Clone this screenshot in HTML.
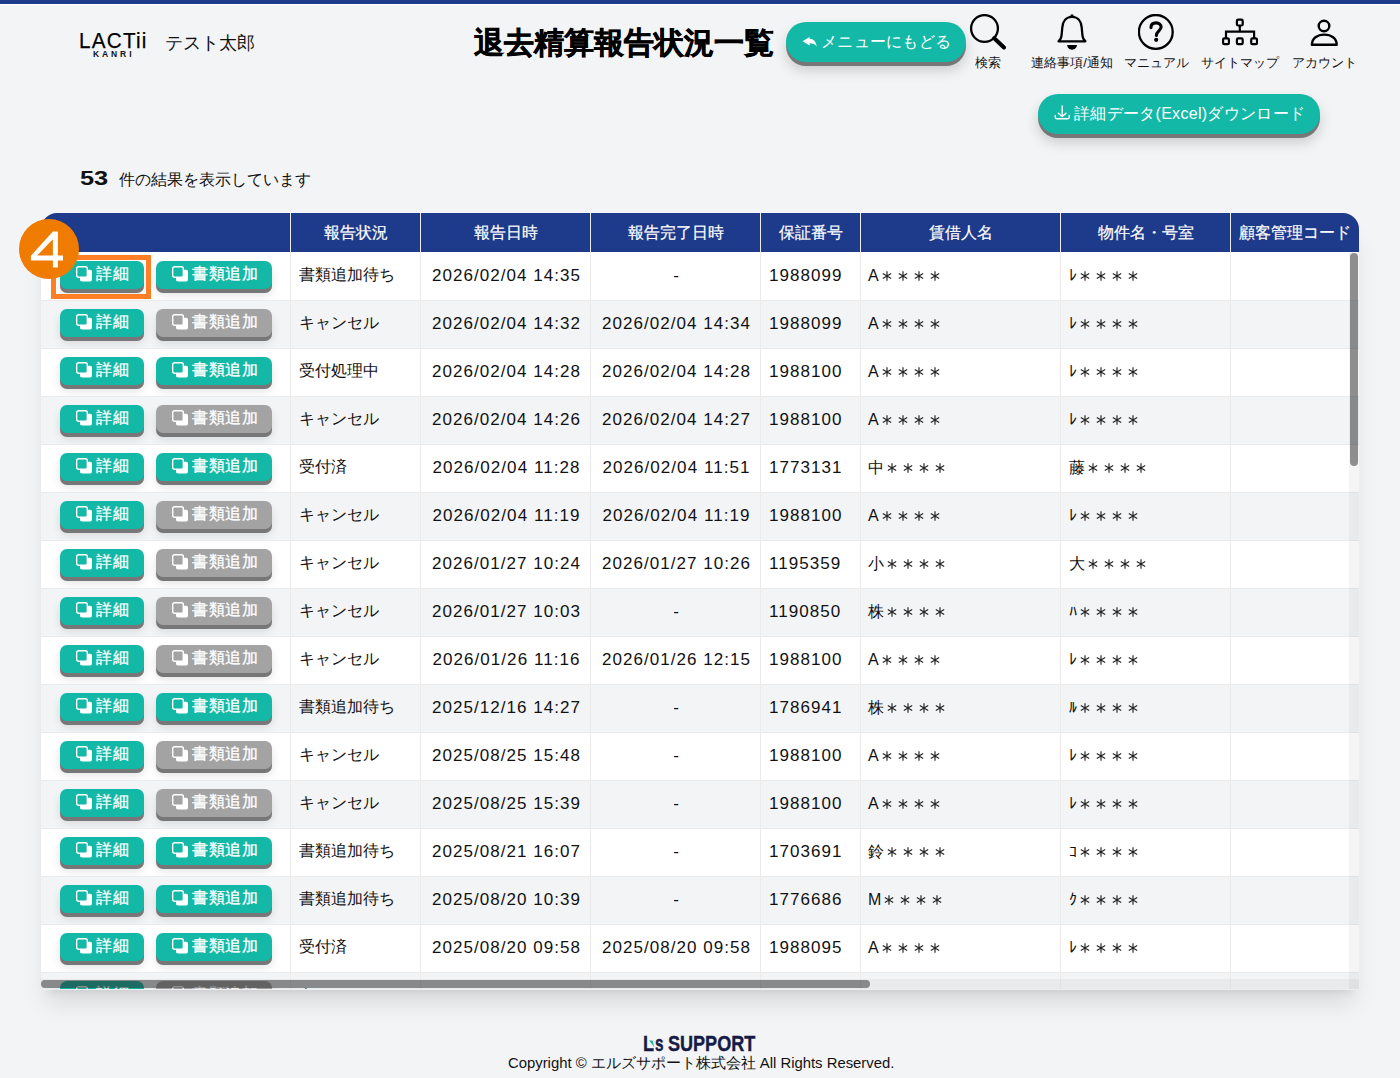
<!DOCTYPE html>
<html lang="ja"><head><meta charset="utf-8"><title>退去精算報告状況一覧</title>
<style>
*{box-sizing:border-box;margin:0;padding:0}
html,body{width:1400px;height:1078px;overflow:hidden}
body{background:#f3f4f6;font-family:"Liberation Sans",sans-serif;color:#111;position:relative}
.topbar{position:absolute;left:0;top:0;width:1400px;height:4px;background:#1e3a8a}
.topline{position:absolute;left:0;top:4px;width:1400px;height:1px;background:#fff}
.abs{position:absolute;white-space:nowrap}
.logo{left:80px;top:29px;width:66px;height:30px}
.logo .l1{position:absolute;left:-1px;top:1.5px;font-size:21.5px;font-weight:normal;-webkit-text-stroke:0.25px #000;letter-spacing:1.3px;line-height:21px;color:#000;transform:scaleX(0.96);transform-origin:0 0}
.logo .l2{position:absolute;left:13px;top:20.5px;font-size:8.5px;font-weight:bold;letter-spacing:2.9px;line-height:8px;color:#111}
.user{left:165px;top:32px;font-size:18px;line-height:22px}
.title{left:474px;top:24.5px;font-size:30px;font-weight:bold;line-height:36px;color:#000;-webkit-text-stroke:0.5px #000}
.pill{position:absolute;background:#14b8a6;color:#fff;border-radius:999px;box-shadow:0 4px 0 #777,0 8px 14px rgba(0,0,0,.18);font-size:16px;line-height:39px;white-space:nowrap;letter-spacing:0.3px}
.menu{left:786px;top:22px;width:180px;height:40px;padding-left:35px}
.dl{left:1038px;top:94px;width:282px;height:40px;padding-left:36px}
.nav{position:absolute;top:12px;width:84px;height:60px;text-align:center}
.nav svg{position:absolute;left:24px;top:2px}
.nav span{position:absolute;left:-20px;right:-20px;top:43px;font-size:13px;line-height:16px;text-align:center}
.count{left:80px;top:166px;font-size:19.5px;font-weight:bold;line-height:24px;transform:scaleX(1.3);transform-origin:0 0}
.counttxt{left:119px;top:170px;font-size:16px;line-height:20px}
.table{position:absolute;left:41px;top:213px;width:1318px;height:776px;overflow:hidden;border-radius:16px 16px 0 0;background:#fff;box-shadow:0 20px 25px -5px rgba(0,0,0,.1),0 8px 10px -6px rgba(0,0,0,.1)}
.thead{position:absolute;left:0;top:0;width:1318px;height:39px;background:#1e3a8a}
.th{position:absolute;top:0;height:39px;line-height:39px;color:#fff;font-weight:normal;-webkit-text-stroke:0.2px #fff;font-size:16px;text-align:center;padding-left:1px}
.row{position:absolute;left:0;width:1318px;height:48px}
.vl{position:absolute;top:0;width:1px;height:776px;background:#ebebeb}
.hl{position:absolute;left:0;width:1318px;height:1px;background:#ebebeb}
.btn{position:absolute;top:9px;height:28px;border-radius:7px;color:#fff;font-size:16px;line-height:26px;letter-spacing:0.6px;-webkit-text-stroke:0.3px #fff;box-shadow:0 4px 0 #777,0 6px 10px rgba(0,0,0,.12);white-space:nowrap}
.btn.teal{background:#14b8a6}
.btn.gray{background:#a3a3a3}
.b1{left:19px;width:84px;padding-left:16px}
.b2{left:115px;width:116px;padding-left:16px}
.ibox{display:inline-block;width:16px;height:16px;vertical-align:-3px;margin-right:4px}
.ibox.teal{color:#14b8a6} .ibox.gray{color:#a3a3a3}
.ic{display:block}
.c{position:absolute;top:0;height:48px;line-height:48px;font-size:16px;white-space:nowrap;color:#111}
.num{font-size:17px;letter-spacing:1.05px}
.ast{display:inline-block;vertical-align:middle;position:relative;top:-1px}
.hw{display:inline-block;width:8px;overflow:visible}
.c2{left:258px;top:-1px}
.c3{left:380.5px;width:170px;text-align:center}
.c4{left:550.5px;width:170px;text-align:center}
.c5{left:728px}
.c6{left:827px}
.c7{left:1028px}
.vtrack{position:absolute;left:1308px;top:39px;width:10px;height:737px;background:rgba(0,0,0,.04)}
.vthumb{position:absolute;left:1309px;top:40px;width:8px;height:213px;border-radius:4px;background:rgba(40,40,40,.5)}
.htrack{position:absolute;left:0;top:766px;width:1318px;height:10px;background:rgba(0,0,0,.04)}
.hthumb{position:absolute;left:0;top:767px;width:829px;height:8px;border-radius:4px;background:rgba(40,40,40,.5)}
.badge{position:absolute;left:19px;top:219px;width:60px;height:60px;border-radius:50%;background:#ef7b00}
.badge svg{display:block}
.hilite{position:absolute;left:51px;top:255px;width:100px;height:44px;border:5px solid #ff7f27}
.fl{position:absolute;top:1033px;font-size:22px;font-weight:bold;color:#161b45;line-height:22px;transform:scaleX(0.82);transform-origin:0 0;-webkit-text-stroke:0.4px #161b45;white-space:nowrap}
.copy{left:508px;top:1053.5px;font-size:14.85px;line-height:18px;color:#111}
</style></head><body>
<svg width="0" height="0" style="position:absolute"><defs><symbol id="a4" viewBox="0 0 64 16"><path d="M8 3.35V12.65M3.8 5.6L12.2 10.4M3.8 10.4L12.2 5.6" stroke="#222" stroke-width="1.15" fill="none"/><path d="M24 3.35V12.65M19.8 5.6L28.2 10.4M19.8 10.4L28.2 5.6" stroke="#222" stroke-width="1.15" fill="none"/><path d="M40 3.35V12.65M35.8 5.6L44.2 10.4M35.8 10.4L44.2 5.6" stroke="#222" stroke-width="1.15" fill="none"/><path d="M56 3.35V12.65M51.8 5.6L60.2 10.4M51.8 10.4L60.2 5.6" stroke="#222" stroke-width="1.15" fill="none"/></symbol></defs></svg>
<div class="topbar"></div><div class="topline"></div>
<div class="abs logo"><div class="l1">LACTii</div><div class="l2">KANRI</div></div>
<div class="abs user">テスト太郎</div>
<div class="abs title">退去精算報告状況一覧</div>
<div class="pill menu"><svg width="16" height="12" viewBox="0 0 16 12" style="position:absolute;left:16px;top:14px"><path d="M0.6 5.2 L7.6 1 V2.7 C11.5 2.7 14 5.5 14.8 10.8 C13.5 8.5 11.5 7.3 7.6 7.3 V9.4 Z" fill="#fff"/></svg>メニューにもどる</div>
<div class="nav" style="left:946px"><svg width="36" height="38" viewBox="0 0 36 38"><circle cx="14.5" cy="14.5" r="13.4" fill="none" stroke="#000" stroke-width="2.3"/><line x1="24.2" y1="24.2" x2="34" y2="33.5" stroke="#000" stroke-width="4" stroke-linecap="round"/></svg><span>検索</span></div>
<div class="nav" style="left:1030px"><svg width="36" height="38" viewBox="0 0 36 38"><path d="M18 2.8 C12 2.8 8.6 7.5 8.3 13.5 L7.6 21 C7.3 24.5 6.2 26 4.5 27.3 H31.5 C29.8 26 28.7 24.5 28.4 21 L27.7 13.5 C27.4 7.5 24 2.8 18 2.8 Z" fill="none" stroke="#000" stroke-width="2.3" stroke-linejoin="round"/><circle cx="18" cy="1.9" r="1.7" fill="#000"/><path d="M13.2 31.1 H22.9 C22.9 33.8 20.7 35.8 18 35.8 C15.3 35.8 13.2 33.8 13.2 31.1 Z" fill="#000"/></svg><span>連絡事項/通知</span></div>
<div class="nav" style="left:1114px"><svg width="36" height="38" viewBox="0 0 36 38"><circle cx="17.8" cy="17.9" r="16.9" fill="none" stroke="#000" stroke-width="2.3"/><path d="M13 13.6 C13 10.3 15.2 8.9 18.1 8.9 C21.1 8.9 23.1 10.7 23.1 13.1 C23.1 16.6 18.4 17.2 18.4 21.4" fill="none" stroke="#000" stroke-width="3.1" stroke-linecap="round"/><circle cx="18.2" cy="25.8" r="2.1" fill="#000"/></svg><span>マニュアル</span></div>
<div class="nav" style="left:1198px"><svg width="36" height="38" viewBox="0 0 36 38"><g fill="none" stroke="#000" stroke-width="2.2"><rect x="1.1" y="24.4" width="5.8" height="5.8" rx="1.3"/><rect x="14.9" y="24.4" width="5.8" height="5.8" rx="1.3"/><rect x="29.2" y="24.4" width="5.8" height="5.8" rx="1.3"/><rect x="14.9" y="5.7" width="5.8" height="5.8" rx="1.3"/><path d="M17.8 11.5 V17.6 M4 24.4 V17.6 H32.1 V24.4"/></g></svg><span>サイトマップ</span></div>
<div class="nav" style="left:1282px"><svg width="36" height="38" viewBox="0 0 36 38"><circle cx="18" cy="12" r="5.3" fill="none" stroke="#000" stroke-width="2.4"/><path d="M5.9 30.8 C5.9 24.3 11.3 20.6 18.3 20.6 C25.3 20.6 30.7 24.3 30.7 30.8 Z" fill="none" stroke="#000" stroke-width="2.4" stroke-linejoin="round"/></svg><span>アカウント</span></div>
<div class="pill dl"><svg width="17" height="17" viewBox="0 0 17 17" style="position:absolute;left:16px;top:10px"><path d="M8.2 2 V12.3 M4.4 9.2 L8.2 12.6 L12 9.2 M1.25 11.3 V13.3 Q1.25 14.75 2.7 14.75 H13.8 Q15.25 14.75 15.25 13.3 V11.3" fill="none" stroke="#fff" stroke-width="1.35" stroke-linecap="round" stroke-linejoin="round"/></svg>詳細データ(Excel)ダウンロード</div>
<div class="abs count">53</div>
<div class="abs counttxt">件の結果を表示しています</div>
<div class="table">
<div class="thead">
<div class="th" style="left:249px;width:130px">報告状況</div>
<div class="th" style="left:379px;width:170px">報告日時</div>
<div class="th" style="left:549px;width:170px">報告完了日時</div>
<div class="th" style="left:719px;width:100px">保証番号</div>
<div class="th" style="left:819px;width:200px">賃借人名</div>
<div class="th" style="left:1019px;width:170px">物件名・号室</div>
<div class="th" style="left:1189px;width:129px;text-align:left;padding-left:9px">顧客管理コード</div>
</div>
<div class="row" style="top:39px;background:#ffffff">
<div class="btn teal b1"><span class="ibox teal"><svg class="ic" width="16" height="16" viewBox="0 0 16 16"><rect x="4" y="3.8" width="12" height="11.8" rx="1.8" fill="#fff"/><rect x="0.7" y="0.7" width="10.6" height="10.6" rx="1.8" fill="currentColor" stroke="#fff" stroke-width="1.4"/></svg></span>詳細</div><div class="btn teal b2"><span class="ibox teal"><svg class="ic" width="16" height="16" viewBox="0 0 16 16"><rect x="4" y="3.8" width="12" height="11.8" rx="1.8" fill="#fff"/><rect x="0.7" y="0.7" width="10.6" height="10.6" rx="1.8" fill="currentColor" stroke="#fff" stroke-width="1.4"/></svg></span>書類追加</div>
<div class="c c2">書類追加待ち</div><div class="c c3 num">2026/02/04 14:35</div><div class="c c4 num">-</div><div class="c c5 num">1988099</div><div class="c c6">A<svg class="ast" width="64" height="16"><use href="#a4"/></svg></div><div class="c c7"><span class="hw">ﾚ</span><svg class="ast" width="64" height="16"><use href="#a4"/></svg></div>
</div>
<div class="row" style="top:87px;background:#f3f4f6">
<div class="btn teal b1"><span class="ibox teal"><svg class="ic" width="16" height="16" viewBox="0 0 16 16"><rect x="4" y="3.8" width="12" height="11.8" rx="1.8" fill="#fff"/><rect x="0.7" y="0.7" width="10.6" height="10.6" rx="1.8" fill="currentColor" stroke="#fff" stroke-width="1.4"/></svg></span>詳細</div><div class="btn gray b2"><span class="ibox gray"><svg class="ic" width="16" height="16" viewBox="0 0 16 16"><rect x="4" y="3.8" width="12" height="11.8" rx="1.8" fill="#fff"/><rect x="0.7" y="0.7" width="10.6" height="10.6" rx="1.8" fill="currentColor" stroke="#fff" stroke-width="1.4"/></svg></span>書類追加</div>
<div class="c c2">キャンセル</div><div class="c c3 num">2026/02/04 14:32</div><div class="c c4 num">2026/02/04 14:34</div><div class="c c5 num">1988099</div><div class="c c6">A<svg class="ast" width="64" height="16"><use href="#a4"/></svg></div><div class="c c7"><span class="hw">ﾚ</span><svg class="ast" width="64" height="16"><use href="#a4"/></svg></div>
</div>
<div class="row" style="top:135px;background:#ffffff">
<div class="btn teal b1"><span class="ibox teal"><svg class="ic" width="16" height="16" viewBox="0 0 16 16"><rect x="4" y="3.8" width="12" height="11.8" rx="1.8" fill="#fff"/><rect x="0.7" y="0.7" width="10.6" height="10.6" rx="1.8" fill="currentColor" stroke="#fff" stroke-width="1.4"/></svg></span>詳細</div><div class="btn teal b2"><span class="ibox teal"><svg class="ic" width="16" height="16" viewBox="0 0 16 16"><rect x="4" y="3.8" width="12" height="11.8" rx="1.8" fill="#fff"/><rect x="0.7" y="0.7" width="10.6" height="10.6" rx="1.8" fill="currentColor" stroke="#fff" stroke-width="1.4"/></svg></span>書類追加</div>
<div class="c c2">受付処理中</div><div class="c c3 num">2026/02/04 14:28</div><div class="c c4 num">2026/02/04 14:28</div><div class="c c5 num">1988100</div><div class="c c6">A<svg class="ast" width="64" height="16"><use href="#a4"/></svg></div><div class="c c7"><span class="hw">ﾚ</span><svg class="ast" width="64" height="16"><use href="#a4"/></svg></div>
</div>
<div class="row" style="top:183px;background:#f3f4f6">
<div class="btn teal b1"><span class="ibox teal"><svg class="ic" width="16" height="16" viewBox="0 0 16 16"><rect x="4" y="3.8" width="12" height="11.8" rx="1.8" fill="#fff"/><rect x="0.7" y="0.7" width="10.6" height="10.6" rx="1.8" fill="currentColor" stroke="#fff" stroke-width="1.4"/></svg></span>詳細</div><div class="btn gray b2"><span class="ibox gray"><svg class="ic" width="16" height="16" viewBox="0 0 16 16"><rect x="4" y="3.8" width="12" height="11.8" rx="1.8" fill="#fff"/><rect x="0.7" y="0.7" width="10.6" height="10.6" rx="1.8" fill="currentColor" stroke="#fff" stroke-width="1.4"/></svg></span>書類追加</div>
<div class="c c2">キャンセル</div><div class="c c3 num">2026/02/04 14:26</div><div class="c c4 num">2026/02/04 14:27</div><div class="c c5 num">1988100</div><div class="c c6">A<svg class="ast" width="64" height="16"><use href="#a4"/></svg></div><div class="c c7"><span class="hw">ﾚ</span><svg class="ast" width="64" height="16"><use href="#a4"/></svg></div>
</div>
<div class="row" style="top:231px;background:#ffffff">
<div class="btn teal b1"><span class="ibox teal"><svg class="ic" width="16" height="16" viewBox="0 0 16 16"><rect x="4" y="3.8" width="12" height="11.8" rx="1.8" fill="#fff"/><rect x="0.7" y="0.7" width="10.6" height="10.6" rx="1.8" fill="currentColor" stroke="#fff" stroke-width="1.4"/></svg></span>詳細</div><div class="btn teal b2"><span class="ibox teal"><svg class="ic" width="16" height="16" viewBox="0 0 16 16"><rect x="4" y="3.8" width="12" height="11.8" rx="1.8" fill="#fff"/><rect x="0.7" y="0.7" width="10.6" height="10.6" rx="1.8" fill="currentColor" stroke="#fff" stroke-width="1.4"/></svg></span>書類追加</div>
<div class="c c2">受付済</div><div class="c c3 num">2026/02/04 11:28</div><div class="c c4 num">2026/02/04 11:51</div><div class="c c5 num">1773131</div><div class="c c6">中<svg class="ast" width="64" height="16"><use href="#a4"/></svg></div><div class="c c7">藤<svg class="ast" width="64" height="16"><use href="#a4"/></svg></div>
</div>
<div class="row" style="top:279px;background:#f3f4f6">
<div class="btn teal b1"><span class="ibox teal"><svg class="ic" width="16" height="16" viewBox="0 0 16 16"><rect x="4" y="3.8" width="12" height="11.8" rx="1.8" fill="#fff"/><rect x="0.7" y="0.7" width="10.6" height="10.6" rx="1.8" fill="currentColor" stroke="#fff" stroke-width="1.4"/></svg></span>詳細</div><div class="btn gray b2"><span class="ibox gray"><svg class="ic" width="16" height="16" viewBox="0 0 16 16"><rect x="4" y="3.8" width="12" height="11.8" rx="1.8" fill="#fff"/><rect x="0.7" y="0.7" width="10.6" height="10.6" rx="1.8" fill="currentColor" stroke="#fff" stroke-width="1.4"/></svg></span>書類追加</div>
<div class="c c2">キャンセル</div><div class="c c3 num">2026/02/04 11:19</div><div class="c c4 num">2026/02/04 11:19</div><div class="c c5 num">1988100</div><div class="c c6">A<svg class="ast" width="64" height="16"><use href="#a4"/></svg></div><div class="c c7"><span class="hw">ﾚ</span><svg class="ast" width="64" height="16"><use href="#a4"/></svg></div>
</div>
<div class="row" style="top:327px;background:#ffffff">
<div class="btn teal b1"><span class="ibox teal"><svg class="ic" width="16" height="16" viewBox="0 0 16 16"><rect x="4" y="3.8" width="12" height="11.8" rx="1.8" fill="#fff"/><rect x="0.7" y="0.7" width="10.6" height="10.6" rx="1.8" fill="currentColor" stroke="#fff" stroke-width="1.4"/></svg></span>詳細</div><div class="btn gray b2"><span class="ibox gray"><svg class="ic" width="16" height="16" viewBox="0 0 16 16"><rect x="4" y="3.8" width="12" height="11.8" rx="1.8" fill="#fff"/><rect x="0.7" y="0.7" width="10.6" height="10.6" rx="1.8" fill="currentColor" stroke="#fff" stroke-width="1.4"/></svg></span>書類追加</div>
<div class="c c2">キャンセル</div><div class="c c3 num">2026/01/27 10:24</div><div class="c c4 num">2026/01/27 10:26</div><div class="c c5 num">1195359</div><div class="c c6">小<svg class="ast" width="64" height="16"><use href="#a4"/></svg></div><div class="c c7">大<svg class="ast" width="64" height="16"><use href="#a4"/></svg></div>
</div>
<div class="row" style="top:375px;background:#f3f4f6">
<div class="btn teal b1"><span class="ibox teal"><svg class="ic" width="16" height="16" viewBox="0 0 16 16"><rect x="4" y="3.8" width="12" height="11.8" rx="1.8" fill="#fff"/><rect x="0.7" y="0.7" width="10.6" height="10.6" rx="1.8" fill="currentColor" stroke="#fff" stroke-width="1.4"/></svg></span>詳細</div><div class="btn gray b2"><span class="ibox gray"><svg class="ic" width="16" height="16" viewBox="0 0 16 16"><rect x="4" y="3.8" width="12" height="11.8" rx="1.8" fill="#fff"/><rect x="0.7" y="0.7" width="10.6" height="10.6" rx="1.8" fill="currentColor" stroke="#fff" stroke-width="1.4"/></svg></span>書類追加</div>
<div class="c c2">キャンセル</div><div class="c c3 num">2026/01/27 10:03</div><div class="c c4 num">-</div><div class="c c5 num">1190850</div><div class="c c6">株<svg class="ast" width="64" height="16"><use href="#a4"/></svg></div><div class="c c7"><span class="hw">ﾊ</span><svg class="ast" width="64" height="16"><use href="#a4"/></svg></div>
</div>
<div class="row" style="top:423px;background:#ffffff">
<div class="btn teal b1"><span class="ibox teal"><svg class="ic" width="16" height="16" viewBox="0 0 16 16"><rect x="4" y="3.8" width="12" height="11.8" rx="1.8" fill="#fff"/><rect x="0.7" y="0.7" width="10.6" height="10.6" rx="1.8" fill="currentColor" stroke="#fff" stroke-width="1.4"/></svg></span>詳細</div><div class="btn gray b2"><span class="ibox gray"><svg class="ic" width="16" height="16" viewBox="0 0 16 16"><rect x="4" y="3.8" width="12" height="11.8" rx="1.8" fill="#fff"/><rect x="0.7" y="0.7" width="10.6" height="10.6" rx="1.8" fill="currentColor" stroke="#fff" stroke-width="1.4"/></svg></span>書類追加</div>
<div class="c c2">キャンセル</div><div class="c c3 num">2026/01/26 11:16</div><div class="c c4 num">2026/01/26 12:15</div><div class="c c5 num">1988100</div><div class="c c6">A<svg class="ast" width="64" height="16"><use href="#a4"/></svg></div><div class="c c7"><span class="hw">ﾚ</span><svg class="ast" width="64" height="16"><use href="#a4"/></svg></div>
</div>
<div class="row" style="top:471px;background:#f3f4f6">
<div class="btn teal b1"><span class="ibox teal"><svg class="ic" width="16" height="16" viewBox="0 0 16 16"><rect x="4" y="3.8" width="12" height="11.8" rx="1.8" fill="#fff"/><rect x="0.7" y="0.7" width="10.6" height="10.6" rx="1.8" fill="currentColor" stroke="#fff" stroke-width="1.4"/></svg></span>詳細</div><div class="btn teal b2"><span class="ibox teal"><svg class="ic" width="16" height="16" viewBox="0 0 16 16"><rect x="4" y="3.8" width="12" height="11.8" rx="1.8" fill="#fff"/><rect x="0.7" y="0.7" width="10.6" height="10.6" rx="1.8" fill="currentColor" stroke="#fff" stroke-width="1.4"/></svg></span>書類追加</div>
<div class="c c2">書類追加待ち</div><div class="c c3 num">2025/12/16 14:27</div><div class="c c4 num">-</div><div class="c c5 num">1786941</div><div class="c c6">株<svg class="ast" width="64" height="16"><use href="#a4"/></svg></div><div class="c c7"><span class="hw">ﾙ</span><svg class="ast" width="64" height="16"><use href="#a4"/></svg></div>
</div>
<div class="row" style="top:519px;background:#ffffff">
<div class="btn teal b1"><span class="ibox teal"><svg class="ic" width="16" height="16" viewBox="0 0 16 16"><rect x="4" y="3.8" width="12" height="11.8" rx="1.8" fill="#fff"/><rect x="0.7" y="0.7" width="10.6" height="10.6" rx="1.8" fill="currentColor" stroke="#fff" stroke-width="1.4"/></svg></span>詳細</div><div class="btn gray b2"><span class="ibox gray"><svg class="ic" width="16" height="16" viewBox="0 0 16 16"><rect x="4" y="3.8" width="12" height="11.8" rx="1.8" fill="#fff"/><rect x="0.7" y="0.7" width="10.6" height="10.6" rx="1.8" fill="currentColor" stroke="#fff" stroke-width="1.4"/></svg></span>書類追加</div>
<div class="c c2">キャンセル</div><div class="c c3 num">2025/08/25 15:48</div><div class="c c4 num">-</div><div class="c c5 num">1988100</div><div class="c c6">A<svg class="ast" width="64" height="16"><use href="#a4"/></svg></div><div class="c c7"><span class="hw">ﾚ</span><svg class="ast" width="64" height="16"><use href="#a4"/></svg></div>
</div>
<div class="row" style="top:567px;background:#f3f4f6">
<div class="btn teal b1"><span class="ibox teal"><svg class="ic" width="16" height="16" viewBox="0 0 16 16"><rect x="4" y="3.8" width="12" height="11.8" rx="1.8" fill="#fff"/><rect x="0.7" y="0.7" width="10.6" height="10.6" rx="1.8" fill="currentColor" stroke="#fff" stroke-width="1.4"/></svg></span>詳細</div><div class="btn gray b2"><span class="ibox gray"><svg class="ic" width="16" height="16" viewBox="0 0 16 16"><rect x="4" y="3.8" width="12" height="11.8" rx="1.8" fill="#fff"/><rect x="0.7" y="0.7" width="10.6" height="10.6" rx="1.8" fill="currentColor" stroke="#fff" stroke-width="1.4"/></svg></span>書類追加</div>
<div class="c c2">キャンセル</div><div class="c c3 num">2025/08/25 15:39</div><div class="c c4 num">-</div><div class="c c5 num">1988100</div><div class="c c6">A<svg class="ast" width="64" height="16"><use href="#a4"/></svg></div><div class="c c7"><span class="hw">ﾚ</span><svg class="ast" width="64" height="16"><use href="#a4"/></svg></div>
</div>
<div class="row" style="top:615px;background:#ffffff">
<div class="btn teal b1"><span class="ibox teal"><svg class="ic" width="16" height="16" viewBox="0 0 16 16"><rect x="4" y="3.8" width="12" height="11.8" rx="1.8" fill="#fff"/><rect x="0.7" y="0.7" width="10.6" height="10.6" rx="1.8" fill="currentColor" stroke="#fff" stroke-width="1.4"/></svg></span>詳細</div><div class="btn teal b2"><span class="ibox teal"><svg class="ic" width="16" height="16" viewBox="0 0 16 16"><rect x="4" y="3.8" width="12" height="11.8" rx="1.8" fill="#fff"/><rect x="0.7" y="0.7" width="10.6" height="10.6" rx="1.8" fill="currentColor" stroke="#fff" stroke-width="1.4"/></svg></span>書類追加</div>
<div class="c c2">書類追加待ち</div><div class="c c3 num">2025/08/21 16:07</div><div class="c c4 num">-</div><div class="c c5 num">1703691</div><div class="c c6">鈴<svg class="ast" width="64" height="16"><use href="#a4"/></svg></div><div class="c c7"><span class="hw">ｺ</span><svg class="ast" width="64" height="16"><use href="#a4"/></svg></div>
</div>
<div class="row" style="top:663px;background:#f3f4f6">
<div class="btn teal b1"><span class="ibox teal"><svg class="ic" width="16" height="16" viewBox="0 0 16 16"><rect x="4" y="3.8" width="12" height="11.8" rx="1.8" fill="#fff"/><rect x="0.7" y="0.7" width="10.6" height="10.6" rx="1.8" fill="currentColor" stroke="#fff" stroke-width="1.4"/></svg></span>詳細</div><div class="btn teal b2"><span class="ibox teal"><svg class="ic" width="16" height="16" viewBox="0 0 16 16"><rect x="4" y="3.8" width="12" height="11.8" rx="1.8" fill="#fff"/><rect x="0.7" y="0.7" width="10.6" height="10.6" rx="1.8" fill="currentColor" stroke="#fff" stroke-width="1.4"/></svg></span>書類追加</div>
<div class="c c2">書類追加待ち</div><div class="c c3 num">2025/08/20 10:39</div><div class="c c4 num">-</div><div class="c c5 num">1776686</div><div class="c c6">M<svg class="ast" width="64" height="16"><use href="#a4"/></svg></div><div class="c c7"><span class="hw">ｸ</span><svg class="ast" width="64" height="16"><use href="#a4"/></svg></div>
</div>
<div class="row" style="top:711px;background:#ffffff">
<div class="btn teal b1"><span class="ibox teal"><svg class="ic" width="16" height="16" viewBox="0 0 16 16"><rect x="4" y="3.8" width="12" height="11.8" rx="1.8" fill="#fff"/><rect x="0.7" y="0.7" width="10.6" height="10.6" rx="1.8" fill="currentColor" stroke="#fff" stroke-width="1.4"/></svg></span>詳細</div><div class="btn teal b2"><span class="ibox teal"><svg class="ic" width="16" height="16" viewBox="0 0 16 16"><rect x="4" y="3.8" width="12" height="11.8" rx="1.8" fill="#fff"/><rect x="0.7" y="0.7" width="10.6" height="10.6" rx="1.8" fill="currentColor" stroke="#fff" stroke-width="1.4"/></svg></span>書類追加</div>
<div class="c c2">受付済</div><div class="c c3 num">2025/08/20 09:58</div><div class="c c4 num">2025/08/20 09:58</div><div class="c c5 num">1988095</div><div class="c c6">A<svg class="ast" width="64" height="16"><use href="#a4"/></svg></div><div class="c c7"><span class="hw">ﾚ</span><svg class="ast" width="64" height="16"><use href="#a4"/></svg></div>
</div>
<div class="row" style="top:759px;background:#f3f4f6">
<div class="btn teal b1"><span class="ibox teal"><svg class="ic" width="16" height="16" viewBox="0 0 16 16"><rect x="4" y="3.8" width="12" height="11.8" rx="1.8" fill="#fff"/><rect x="0.7" y="0.7" width="10.6" height="10.6" rx="1.8" fill="currentColor" stroke="#fff" stroke-width="1.4"/></svg></span>詳細</div><div class="btn gray b2"><span class="ibox gray"><svg class="ic" width="16" height="16" viewBox="0 0 16 16"><rect x="4" y="3.8" width="12" height="11.8" rx="1.8" fill="#fff"/><rect x="0.7" y="0.7" width="10.6" height="10.6" rx="1.8" fill="currentColor" stroke="#fff" stroke-width="1.4"/></svg></span>書類追加</div>
<div class="c c2">キャンセル</div><div class="c c3 num">2025/08/19 17:12</div><div class="c c4 num">2025/08/19 17:20</div><div class="c c5 num">1988100</div><div class="c c6">A<svg class="ast" width="64" height="16"><use href="#a4"/></svg></div><div class="c c7"><span class="hw">ﾚ</span><svg class="ast" width="64" height="16"><use href="#a4"/></svg></div>
</div>
<div class="hl" style="top:87px"></div>
<div class="hl" style="top:135px"></div>
<div class="hl" style="top:183px"></div>
<div class="hl" style="top:231px"></div>
<div class="hl" style="top:279px"></div>
<div class="hl" style="top:327px"></div>
<div class="hl" style="top:375px"></div>
<div class="hl" style="top:423px"></div>
<div class="hl" style="top:471px"></div>
<div class="hl" style="top:519px"></div>
<div class="hl" style="top:567px"></div>
<div class="hl" style="top:615px"></div>
<div class="hl" style="top:663px"></div>
<div class="hl" style="top:711px"></div>
<div class="hl" style="top:759px"></div>
<div class="hl" style="top:807px"></div>
<div class="vl" style="left:249px"></div>
<div class="vl" style="left:379px"></div>
<div class="vl" style="left:549px"></div>
<div class="vl" style="left:719px"></div>
<div class="vl" style="left:819px"></div>
<div class="vl" style="left:1019px"></div>
<div class="vl" style="left:1189px"></div>
<div class="vtrack"></div><div class="vthumb"></div>
<div class="htrack"></div><div class="hthumb"></div>

</div>
<div style="position:absolute;left:41px;top:989px;width:1319px;height:1px;background:#eceef0"></div><div style="position:absolute;left:1359px;top:252px;width:1px;height:738px;background:#eceef0"></div>
<div class="hilite"></div>
<div class="badge"><svg width="60" height="60" viewBox="19 219 60 60"><path fill="#fff" fill-rule="evenodd" d="M52.9 231.6 H57.9 V255.5 H63 V260.5 H57.9 V267.5 H52.9 V260.5 H30.9 V255.8 Z M52.9 239.2 L37.2 255.5 H52.9 Z"/></svg></div>
<div class="flogo"><span class="fl" style="left:643px">L</span><svg style="position:absolute;left:648px;top:1040px" width="8" height="8" viewBox="0 0 8 8"><path d="M1.2 0.5 H4.6 L6.2 7.2 Z" fill="#19b3a0"/></svg><span class="fl" style="left:654.5px;transform:scaleX(0.7)">s</span><span class="fl" style="left:667.5px">SUPPORT</span></div>
<div class="abs copy">Copyright © エルズサポート株式会社 All Rights Reserved.</div>
</body></html>
